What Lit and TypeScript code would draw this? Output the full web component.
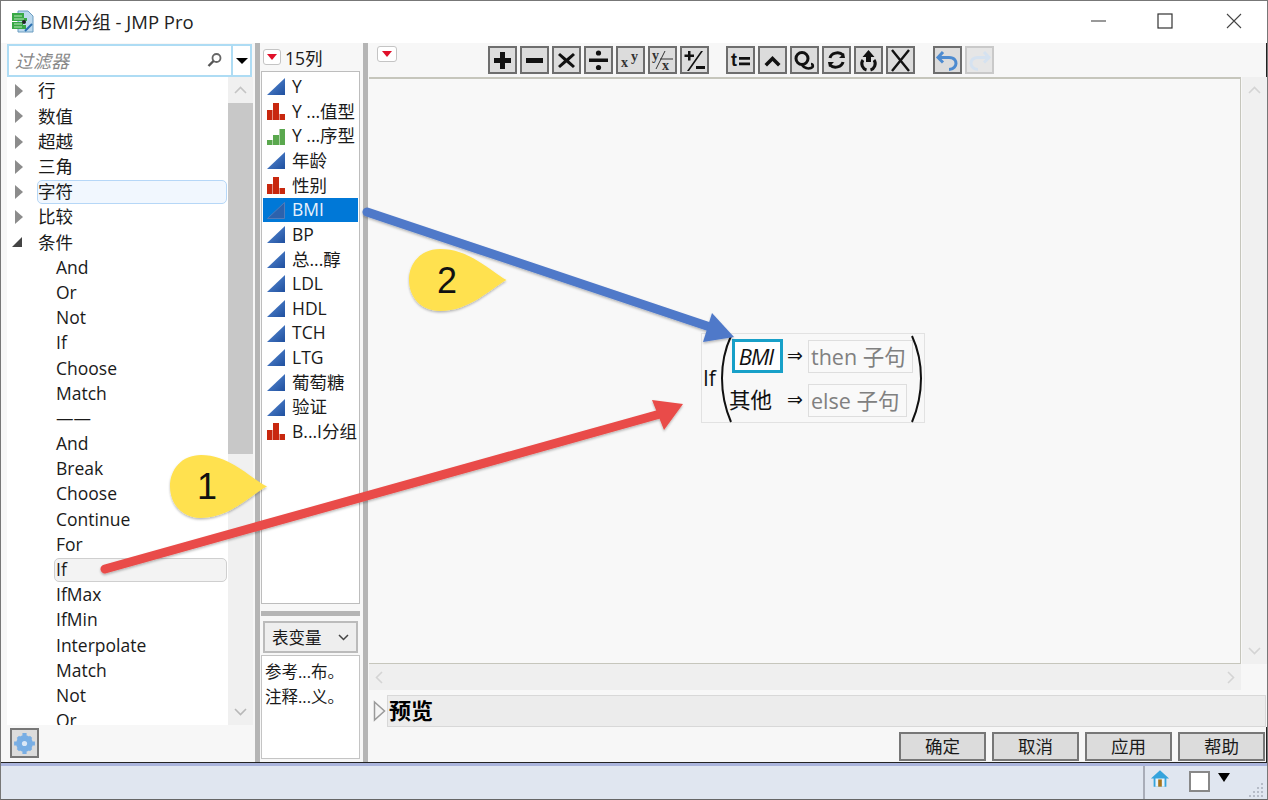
import { LitElement, html, css, svg } from "lit";
import { customElement } from "lit/decorators.js";

const tree = ["行", "数值", "超越", "三角", "字符", "比较"];
const cond = ["And","Or","Not","If","Choose","Match","——","And","Break","Choose","Continue","For","If","IfMax","IfMin","Interpolate","Match","Not","Or"];
const cols: [string, string][] = [["Y","c"],["Y ...值型","n"],["Y ...序型","o"],["年龄","c"],["性别","n"],["BMI","s"],["BP","c"],["总...醇","c"],["LDL","c"],["HDL","c"],["TCH","c"],["LTG","c"],["葡萄糖","c"],["验证","c"],["B...I分组","n"]];

const tb = (body: unknown, dis = false, gap = "") => ({ body, dis, gap });
const tools = [
  tb(svg`<path d="M10 4h5v6h6v5h-6v6h-5v-6H4v-5h6z" fill="#111"/>`),
  tb(svg`<path d="M4 10h17v5H4z" fill="#111"/>`),
  tb(svg`<path d="M6 5l6.500 5.500L19 5l2 2-6 5.500 6 5.500-2 2-6.500-5.500L6 20l-2-2 6-5.500-6-5.500z" fill="#111"/>`),
  tb(svg`<circle cx="12.500" cy="5" r="2.600" fill="#111"/><rect x="3" y="10.500" width="19" height="3.500" fill="#111"/><circle cx="12.500" cy="19.500" r="2.600" fill="#111"/>`),
  tb(svg`<text x="3" y="19" class="ms">x</text><text x="13" y="13" class="ms">y</text>`),
  tb(svg`<text x="2" y="12" class="ms">y</text><path d="M6 21L15 3" fill="none" stroke="#333" stroke-width="1"/><path d="M10 11h13" fill="none" stroke="#333" stroke-width="1"/><text x="12" y="22" class="ms">x</text>`),
  tb(svg`<path d="M6 3h2.500v3.500H12V9H8.500v3.500H6V9H2.500V6.500H6zM19 3h2L7 23H5zM14 18h9v3h-9z" fill="#111"/>`),
  tb(svg`<text x="3" y="18" class="tx">t</text><path d="M11 9h11v2.800H11zM11 14.500h11v2.800H11z" fill="#111"/>`, false, "g1"),
  tb(svg`<path d="M12.500 8l8 8-2.500 2.500-5.500-5.500L7 18.500 4.500 16z" fill="#111"/>`),
  tb(svg`<circle cx="10" cy="10.500" r="6" fill="none" stroke="#111" stroke-width="3"/><path d="M10 17c2 3 6 4 9 3 3-1 2-4 0-4" fill="none" stroke="#111" stroke-width="2.500"/>`),
  tb(svg`<path d="M6 10c1-5 9-7 13-3M19 14c-1 5-9 7-13 3" fill="none" stroke="#111" stroke-width="3"/><path d="M21 10l-6 0 5-5zM4 14l6 0-5 5z" fill="#111"/>`),
  tb(svg`<path d="M12.500 2l6 7h-3.500v5h-5V9H6.500z" fill="#111"/><path d="M7 12c-3 4 0 9 3.500 10M18 12c3 4 0 9-3.500 10" fill="none" stroke="#111" stroke-width="3"/>`),
  tb(svg`<path d="M4 2l17 21M21 2L4 23" fill="none" stroke="#111" stroke-width="2.400"/>`),
  tb(svg`<path d="M8 4L3 9.500l5 5" fill="none" stroke="#4d8bd0" stroke-width="3"/><path d="M4 9.500h10c6 0 7 4 7 6s-2 6-7 6" fill="none" stroke="#4d8bd0" stroke-width="3"/>`, false, "g2"),
  tb(svg`<path d="M17 4l5 5.500-5 5" fill="none" stroke="#d5e2f0" stroke-width="3"/><path d="M21 9.500H11c-6 0-7 4-7 6s2 6 7 6" fill="none" stroke="#d5e2f0" stroke-width="3"/>`, true),
];

const colIcon = (t: string) => {
  if (t === "n") return html`<svg class="ci" viewBox="0 0 18 17"><path d="M0 7h5.500v10H0zM6 0h6v17H6zM12.500 11H18v6h-5.500z" fill="#c8280f"/></svg>`;
  if (t === "o") return html`<svg class="ci" viewBox="0 0 18 17"><path d="M0 12h5.500v5H0zM6 7h6v10H6zM12.500 1H18v16h-5.500z" fill="#5aa84e"/></svg>`;
  if (t === "s") return html`<svg class="ci" viewBox="0 0 18 17"><path d="M.5 16.500L17.500 .5v16z" fill="#2c62ad" stroke="#5f7fb8" stroke-width=".8"/></svg>`;
  return html`<svg class="ci" viewBox="0 0 18 17"><defs><linearGradient id="g" x1="0" y1="0" x2="1" y2="1"><stop offset="0" stop-color="#5b8fd8"/><stop offset="1" stop-color="#1f4f9e"/></linearGradient></defs><path d="M0 17L18 0v17z" fill="url(#g)"/></svg>`;
};

const redMenu = html`<svg viewBox="0 0 10 6" class="tri"><path d="M0 0h10L5 6z" fill="#e0102a"/></svg>`;

@customElement("app-root")
export class AppRoot extends LitElement {
  static styles = css`
    :host { display: block; width: 1268px; height: 800px; position: relative; overflow: hidden;
      font-family: "Open Sans", "Noto Sans CJK SC", sans-serif; color: #1a1a1a; font-size: 17.500px; }
    * { box-sizing: border-box; }
    .win { height: 800px; display: flex; flex-direction: column; border: 1px solid #777; border-bottom-color: #666; }
    .title { height: 42px; flex: none; background: #fff; display: flex; align-items: center; padding: 0 0 2px 10px; }
    .title .name { margin-left: 6px; font-size: 18.500px; color: #222; white-space: nowrap; }
    .wc { margin-left: auto; display: flex; align-items: center; }
    .wc svg { width: 16px; height: 16px; display: block; }
    .wc .m { margin-right: 51px; }
    .wc .x { margin: 0 25px 0 53px; }
    .body { flex: 1; min-height: 0; display: flex; background: #f7f7f7; border-bottom: 1px solid #222; }
    .left { width: 246px; margin-left: 6px; flex: none; display: flex; flex-direction: column; }
    .filter { display: flex; height: 33px; margin-top: 1px; flex: none; }
    .fin { width: 226px; border: 2px solid #aedcf4; background: #fff; display: flex; align-items: center; padding: 0 8px 2px 6px; color: #888; font-style: italic; font-size: 18px; }
    .fin svg { margin-left: auto; width: 16px; height: 16px; }
    .fdd { width: 19px; border: 2px solid #aedcf4; border-left: 0; background: #fff; display: flex; align-items: center; justify-content: center; }
    .fdd i { border: 6px solid transparent; border-top: 6px solid #000; border-bottom: 0; }
    .lwrap { flex: 1; min-height: 0; display: flex; }
    .tree { flex: 1; min-width: 0; background: #fff; overflow: hidden; padding-top: 1.600px; }
    .row { height: 25.200px; display: flex; align-items: center; white-space: nowrap; position: relative; line-height: 1; }
    .row .ar { width: 30px; flex: none; display: flex; padding-left: 8px; }
    .ar i { border: 7px solid transparent; border-left: 8px solid #8c8c8c; border-right: 0; }
    .ar b { width: 0; height: 0; border-style: solid; border-width: 0 0 10px 10px; border-color: transparent transparent #444 transparent; margin-left: -3px; }
    .lab { flex: 1; height: 24px; display: flex; align-items: center; margin-right: 1px; border: 1px solid transparent; border-radius: 5px; }
    .sel { background: #f1f7fe; border: 1.500px solid #b6d7f7; }
    .sel2 { background: #f3f3f3; border: 1px solid #cfcfcf; margin-left: -1px; padding-left: 1px; }
    .child { padding-left: 48px; }
    .sb { width: 25px; flex: none; display: flex; flex-direction: column; background: #f0f0f0; }
    .sbc { height: 26px; flex: none; display: flex; align-items: center; justify-content: center; }
    .sbc svg { width: 13px; height: 8px; }
    .thumb { height: 351px; flex: none; background: #c8c8c8; }
    .sp { flex: 1; }
    .lfoot { height: 37px; flex: none; padding: 3px 0 0 3px; }
    .gear { width: 29px; height: 30px; border: 2px solid #777; background: #dcdcdc; display: flex; align-items: center; justify-content: center; }
    .gear svg { width: 25px; height: 25px; }
    .vsplit { width: 5px; flex: none; background: #b5b5b5; margin-left: 2px; }
    .cols { width: 103px; flex: none; display: flex; flex-direction: column; padding-left: 1px; }
    .chead { height: 28px; flex: none; display: flex; align-items: center; padding-left: 2px; }
    .mbtn { width: 18px; height: 16px; border: 1px solid #c4c4c4; border-radius: 3px; background: #fff; display: flex; align-items: center; justify-content: center; flex: none; }
    .tri { width: 10px; height: 6px; }
    .chead span { margin-left: 4px; font-size: 17.500px; }
    .clist { width: 99px; height: 533px; flex: none; background: #fff; border: 1px solid #bdbdbd; padding: 2.500px 1px 0; overflow: hidden; }
    .crow { height: 24.650px; display: flex; align-items: center; padding-left: 4px; white-space: nowrap; font-size: 17.500px; line-height: 1; }
    .crow.on { background: #0078d7; color: #e8f2fc; }
    .ci { width: 18px; height: 17px; flex: none; margin-right: 7px; }
    .hsplit { width: 99px; height: 5px; flex: none; background: #b5b5b5; margin-top: 7px; }
    .dd { width: 95px; height: 32px; flex: none; margin: 5px 0 0 2px; border: 2px solid #bbb; background: #eee; display: flex; align-items: center; padding: 0 7px; font-size: 16.500px; }
    .dd svg { margin-left: auto; width: 11px; height: 7px; }
    .notes { width: 99px; height: 104px; flex: none; margin-top: 2px; background: #fff; border: 1px solid #c4c4c4; padding: 4px 3px; font-size: 16.500px; line-height: 24.500px; white-space: nowrap; }
    .vsplit2 { width: 5px; flex: none; background: #b5b5b5; }
    .main { flex: 1; min-width: 0; display: flex; flex-direction: column; padding-left: 1px; }
    .tools { height: 34px; flex: none; display: flex; border-right: 1px solid #222; padding: 3px 0 0 8px; }
    .tools .mbtn { width: 20px; }
    .tbar { display: flex; gap: 3px; margin-left: 91px; height: 28px; }
    .tbtn { width: 29px; height: 28px; border: 2px solid #6e6e6e; background: #dcdcdc; display: flex; align-items: center; justify-content: center; flex: none; }
    .tbtn svg { width: 25px; height: 24px; display: block; }
    .tbtn.dis { border-color: #c9c9c9; background: #e6e6e6; }
    .tbtn.g1 { margin-left: 14px; }
    .tbtn.g2 { margin-left: 15px; }
    .ms { font: bold 14px "Liberation Serif", serif; fill: #333; }
    .tx { font: bold 18px "Liberation Sans", sans-serif; fill: #111; }
    .cvrow { height: 587px; flex: none; display: flex; }
    .canvas { width: 872px; flex: none; background: #f8f8f8; border: 1px solid #c6c6bc; border-width: 2px 1px 1px 0; padding: 254px 0 0 332px; }
    .vs { width: 25px; flex: none; background: #f0f0f0; display: flex; flex-direction: column; justify-content: space-between; margin-left: 1px; }
    .hs { height: 26px; flex: none; background: #efefef; width: 872px; display: flex; align-items: center; justify-content: space-between; padding: 0 6px; margin-bottom: 5px; }
    .hs svg { width: 8px; height: 13px; }
    .pv { height: 32px; flex: none; display: flex; align-items: center; padding-left: 4px; }
    .pv svg { width: 13px; height: 22px; flex: none; }
    .pvb { margin: 0 1px 0 1px; flex: 1; height: 32px; background: #ececec; border: 1px solid #d8d8d8; display: flex; align-items: center; font-weight: 700; font-size: 22px; color: #000; padding: 0 0 4px 1px; }
    .btns { flex: 1; display: flex; justify-content: flex-end; gap: 6px; padding: 5px 1px 0 0; border-right: 1px solid #222; }
    .btn { width: 87px; height: 29px; border: 2px solid #777; background: #dcdcdc; display: flex; align-items: center; justify-content: center; font-size: 17.500px; line-height: 1; }
    .status { height: 36px; flex: none; background: #e0e6f0; border-top: 3px solid #aab4dc; display: flex; position: relative; }
    .status .div { margin-left: 1142px; width: 2px; background: #a9adb8; }
    .home { width: 20px; height: 19px; margin: 3px 0 0 5px; }
    .sq { width: 21px; height: 21px; border: 2px solid #888; background: #fff; margin: 5px 0 0 19px; }
    .dn { width: 0; height: 0; margin: 7px 0 0 8px; border: 6.500px solid transparent; border-top: 9px solid #000; border-bottom: 0; }
    .grip { width: 16px; height: 16px; margin: 16px 0 0 19px; }
    .eq { width: 224px; height: 90px; border: 1px solid #e2e2e2; background: #f8f8f8; position: relative; display: grid; grid-template-columns: 20px 87px 1fr; color: #111; }
    .if { grid-row: 1 / 3; align-self: center; padding-left: 1px; font-size: 21px; }
    .eq .par { position: absolute; left: 0; top: 0; width: 224px; height: 90px; }
    .c1 { padding: 5px 0 0 10px; }
    .c1b { width: 51px; height: 34px; border: 3px solid #18a0c8; background: #fff; font-style: italic; font-size: 22px; display: flex; align-items: center; justify-content: center; letter-spacing: -1px; padding-right: 3px; }
    .oth { padding: 6px 0 0 7px; font-size: 21.500px; line-height: 1.4; }
    .c2 { display: flex; align-items: flex-start; padding-top: 6px; margin-left: -22px; }
    .arr { width: 21px; font-size: 19px; line-height: 30px; flex: none; text-align: left; font-family: "DejaVu Sans", sans-serif; }
    .cl { height: 33px; border: 1px solid #dedede; color: #808080; font-size: 21.500px; display: flex; align-items: center; padding: 0 2px 2px; white-space: nowrap; background: #f9f9f9; }
    .cl.t { width: 105px; }
    .cl.e { width: 99px; }
    .c2.b { padding-top: 5px; }
    .ov { position: absolute; left: 0; top: 0; width: 1268px; height: 800px; pointer-events: none; }
    .num { font: 36px "Liberation Sans", sans-serif; fill: #111; text-anchor: middle; }
  `;

  render() {
    return html`
      <div class="win">
        <div class="title">
          <svg width="23" height="23" viewBox="0 0 23 23">
            <path d="M7 1h10l5 5v16H7z" fill="#bcd9ee" stroke="#6b9cc0"/>
            <path d="M1 3h12v5h3v3H1zM1 12h11v3h3v4H1z" fill="#38a845"/>
            <path d="M3 6h8M3 9h10M3 14h8M3 17h8" stroke="#b8e6bc" stroke-width="1"/>
            <circle cx="13" cy="12" r="2" fill="#222"/>
            <path d="M14 21l7-7" stroke="#2a6fb0" stroke-width="2"/>
          </svg>
          <span class="name">BMI分组 - JMP Pro</span>
          <div class="wc">
            <svg class="m" viewBox="0 0 16 16"><path d="M1 8h15" stroke="#555" stroke-width="1.200"/></svg>
            <svg viewBox="0 0 16 16"><rect x="1" y="1" width="14" height="14" fill="none" stroke="#333" stroke-width="1.200"/></svg>
            <svg class="x" viewBox="0 0 16 16"><path d="M1 1l14 14M15 1L1 15" stroke="#444" stroke-width="1.100"/></svg>
          </div>
        </div>
        <div class="body">
          <div class="left">
            <div class="filter">
              <div class="fin">过滤器
                <svg viewBox="0 0 16 16"><circle cx="9.500" cy="6" r="4" fill="none" stroke="#666" stroke-width="1.800"/><path d="M6.500 9l-5 5" stroke="#555" stroke-width="2.400"/></svg>
              </div>
              <div class="fdd"><i></i></div>
            </div>
            <div class="lwrap">
              <div class="tree">
                ${tree.map((t) => html`<div class="row"><div class="ar"><i></i></div><div class="lab ${t === "字符" ? "sel" : ""}">${t}</div></div>`)}
                <div class="row"><div class="ar"><b></b></div><div class="lab">条件</div></div>
                ${cond.map((t, i) => html`<div class="row child"><div class="lab ${i === 12 ? "sel2" : ""}">${t}</div></div>`)}
              </div>
              <div class="sb">
                <div class="sbc"><svg viewBox="0 0 13 8"><path d="M1 7l5.500-5.500L12 7" fill="none" stroke="#c4c4c4" stroke-width="1.600"/></svg></div>
                <div class="thumb"></div>
                <div class="sp"></div>
                <div class="sbc"><svg viewBox="0 0 13 8"><path d="M1 1l5.500 5.500L12 1" fill="none" stroke="#b8b8b8" stroke-width="1.600"/></svg></div>
              </div>
            </div>
            <div class="lfoot">
              <div class="gear"><svg viewBox="0 0 24 24"><g fill="#78aee4"><circle cx="12" cy="12" r="8"/><path d="M10 2h4v5h-4zM10 17h4v5h-4zM2 10h5v4H2zM17 10h5v4h-5z"/><path d="M4.500 6.800l2.300-2.300 3.500 3.500L8 10.300zM13.700 16l2.300-2.300 3.500 3.500-2.300 2.300zM4.500 17.200L8 13.700l2.300 2.300-3.500 3.500zM13.700 8l3.500-3.500 2.300 2.300L16 10.300z"/></g><circle cx="12" cy="12" r="2.500" fill="#dbe8f6"/></svg></div>
            </div>
          </div>
          <div class="vsplit"></div>
          <div class="cols">
            <div class="chead"><div class="mbtn">${redMenu}</div><span>15列</span></div>
            <div class="clist">
              ${cols.map(([n, t]) => html`<div class="crow ${t === "s" ? "on" : ""}">${colIcon(t)}${n}</div>`)}
            </div>
            <div class="hsplit"></div>
            <div class="dd">表变量<svg viewBox="0 0 11 7"><path d="M1 1l4.500 4.500L10 1" fill="none" stroke="#444" stroke-width="1.500"/></svg></div>
            <div class="notes">参考...布。<br />注释...义。</div>
          </div>
          <div class="vsplit2"></div>
          <div class="main">
            <div class="tools">
              <div class="mbtn">${redMenu}</div>
              <div class="tbar">
                ${tools.map((t) => html`<div class="tbtn ${t.dis ? "dis" : ""} ${t.gap}"><svg viewBox="0 0 25 24">${t.body}</svg></div>`)}
              </div>
            </div>
            <div class="cvrow">
              <div class="canvas">
                <div class="eq">
                  <svg class="par" viewBox="0 0 224 90"><path d="M29 2C17 28 17 60 29 88" fill="none" stroke="#111" stroke-width="2"/><path d="M210 2C222 28 222 60 210 88" fill="none" stroke="#111" stroke-width="2"/></svg>
                  <div class="if">If</div>
                  <div class="c1"><div class="c1b">BMI</div></div>
                  <div class="c2"><span class="arr">⇒</span><div class="cl t">then 子句</div></div>
                  <div class="oth">其他</div>
                  <div class="c2 b"><span class="arr">⇒</span><div class="cl e">else 子句</div></div>
                </div>
              </div>
              <div class="vs">
                <div class="sbc"><svg viewBox="0 0 13 8"><path d="M1 7l5.500-5.500L12 7" fill="none" stroke="#d4d4d4" stroke-width="1.600"/></svg></div>
                <div class="sbc"><svg viewBox="0 0 13 8"><path d="M1 1l5.500 5.500L12 1" fill="none" stroke="#d4d4d4" stroke-width="1.600"/></svg></div>
              </div>
            </div>
            <div class="hs">
              <svg viewBox="0 0 8 13"><path d="M7 1L1.500 6.500 7 12" fill="none" stroke="#d4d4d4" stroke-width="1.600"/></svg>
              <svg viewBox="0 0 8 13"><path d="M1 1l5.500 5.500L1 12" fill="none" stroke="#d4d4d4" stroke-width="1.600"/></svg>
            </div>
            <div class="pv">
              <svg viewBox="0 0 13 22"><path d="M1.500 2l10 9-10 9z" fill="#f4f4f4" stroke="#9a9a9a" stroke-width="1.500"/></svg>
              <div class="pvb">预览</div>
            </div>
            <div class="btns">
              <div class="btn">确定</div><div class="btn">取消</div><div class="btn">应用</div><div class="btn">帮助</div>
            </div>
          </div>
        </div>
        <div class="status">
          <div class="div"></div>
          <svg class="home" viewBox="0 0 22 20"><path d="M11 1L1 10h3v9h14v-9h3z" fill="#35a3dc"/><path d="M6 10h10v9H6z" fill="#e8f3fa"/><path d="M9 11h4v8H9z" fill="#a8741c"/></svg>
          <div class="sq"></div>
          <div class="dn"></div>
          <svg class="grip" viewBox="0 0 16 16"><g fill="#b6bcc8"><rect x="12" y="1" width="2" height="2"/><rect x="8" y="5" width="2" height="2"/><rect x="12" y="5" width="2" height="2"/><rect x="4" y="9" width="2" height="2"/><rect x="8" y="9" width="2" height="2"/><rect x="12" y="9" width="2" height="2"/><rect x="0" y="13" width="2" height="2"/><rect x="4" y="13" width="2" height="2"/><rect x="8" y="13" width="2" height="2"/><rect x="12" y="13" width="2" height="2"/></g></svg>
        </div>
      </div>
      <svg class="ov" viewBox="0 0 1268 800">
        <defs><filter id="sh" x="-5%" y="-5%" width="110%" height="115%"><feDropShadow dx="0" dy="1.500" stdDeviation="1.200" flood-color="#000" flood-opacity=".28"/></filter></defs>
        <g filter="url(#sh)">
          <path d="M506.500 280C490 271 470 249 440 249C421 249 409 263 409 280C409 297 421 311 440 311C470 311 490 289 506.500 280Z" fill="#ffe14f"/>
          <path d="M267 486.500C250 478 230 455 201 455C182 455 170 469 170 486.500C170 504 182 518 201 518C230 518 250 495 267 486.500Z" fill="#ffe14f"/>
          <path d="M105 569L660 414" stroke="#e94c48" stroke-width="9" stroke-linecap="round"/>
          <path d="M683 404L652 400L664 430Z" fill="#e94c48"/>
          <path d="M367 212L710 327" stroke="#4f79c9" stroke-width="9" stroke-linecap="round"/>
          <path d="M734 337L712 313L703 342Z" fill="#4f79c9"/>
        </g>
        <text class="num" x="207" y="499">1</text>
        <text class="num" x="447" y="293">2</text>
      </svg>
    `;
  }
}
